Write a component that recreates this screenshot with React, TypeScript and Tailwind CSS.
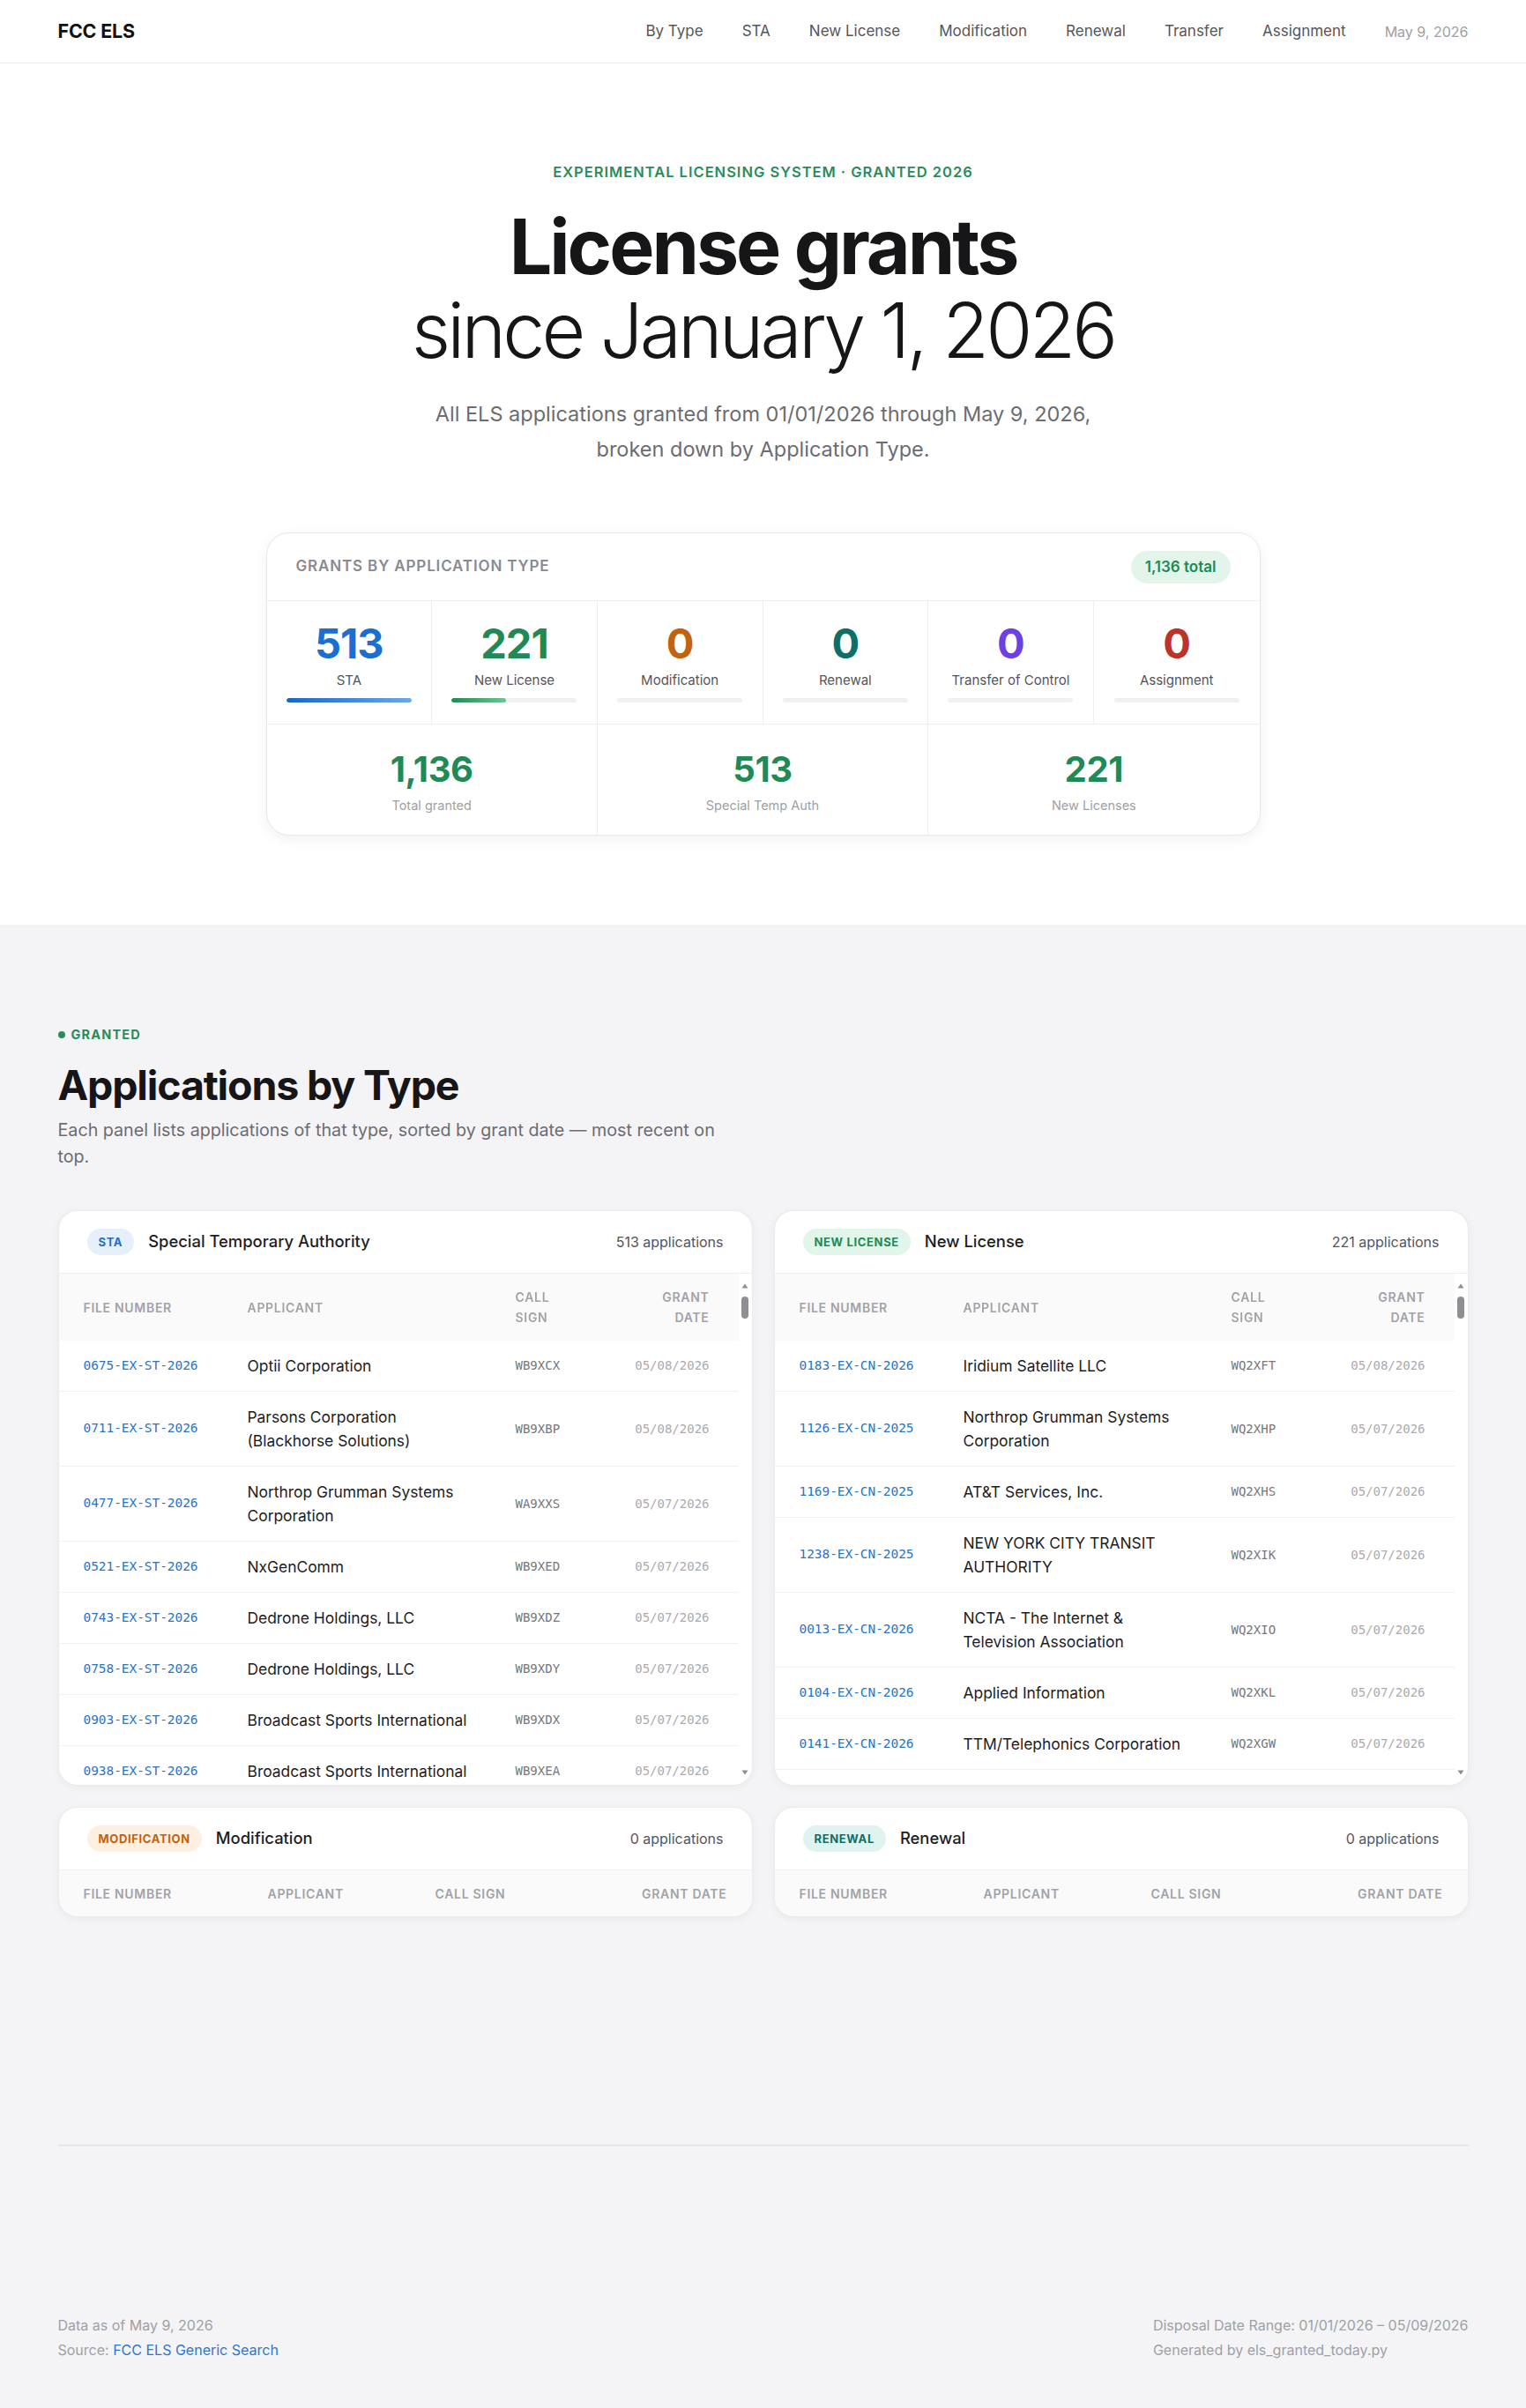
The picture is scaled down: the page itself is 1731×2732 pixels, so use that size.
import React from "react";

type Row = {
  file: string;
  applicant: string;
  call: string;
  date: string;
};

const staRows: Row[] = [
  { file: "0675-EX-ST-2026", applicant: "Optii Corporation", call: "WB9XCX", date: "05/08/2026" },
  { file: "0711-EX-ST-2026", applicant: "Parsons Corporation (Blackhorse Solutions)", call: "WB9XBP", date: "05/08/2026" },
  { file: "0477-EX-ST-2026", applicant: "Northrop Grumman Systems Corporation", call: "WA9XXS", date: "05/07/2026" },
  { file: "0521-EX-ST-2026", applicant: "NxGenComm", call: "WB9XED", date: "05/07/2026" },
  { file: "0743-EX-ST-2026", applicant: "Dedrone Holdings, LLC", call: "WB9XDZ", date: "05/07/2026" },
  { file: "0758-EX-ST-2026", applicant: "Dedrone Holdings, LLC", call: "WB9XDY", date: "05/07/2026" },
  { file: "0903-EX-ST-2026", applicant: "Broadcast Sports International", call: "WB9XDX", date: "05/07/2026" },
  { file: "0938-EX-ST-2026", applicant: "Broadcast Sports International", call: "WB9XEA", date: "05/07/2026" },
  { file: "0940-EX-ST-2026", applicant: "Broadcast Sports International", call: "WB9XEB", date: "05/07/2026" },
  { file: "0612-EX-ST-2026", applicant: "Optii Corporation", call: "WB9XCW", date: "05/06/2026" },
];

const newRows: Row[] = [
  { file: "0183-EX-CN-2026", applicant: "Iridium Satellite LLC", call: "WQ2XFT", date: "05/08/2026" },
  { file: "1126-EX-CN-2025", applicant: "Northrop Grumman Systems Corporation", call: "WQ2XHP", date: "05/07/2026" },
  { file: "1169-EX-CN-2025", applicant: "AT&T Services, Inc.", call: "WQ2XHS", date: "05/07/2026" },
  { file: "1238-EX-CN-2025", applicant: "NEW YORK CITY TRANSIT AUTHORITY", call: "WQ2XIK", date: "05/07/2026" },
  { file: "0013-EX-CN-2026", applicant: "NCTA - The Internet & Television Association", call: "WQ2XIO", date: "05/07/2026" },
  { file: "0104-EX-CN-2026", applicant: "Applied Information", call: "WQ2XKL", date: "05/07/2026" },
  { file: "0141-EX-CN-2026", applicant: "TTM/Telephonics Corporation", call: "WQ2XGW", date: "05/07/2026" },
  { file: "0122-EX-CN-2026", applicant: "Iridium Satellite LLC", call: "WQ2XFS", date: "05/06/2026" },
  { file: "0098-EX-CN-2026", applicant: "Applied Information", call: "WQ2XFR", date: "05/06/2026" },
];

const typeStats = [
  { value: "513", label: "STA", color: "text-[#1b6fd0]", fill: "w-full bg-linear-to-r from-[#1766c9] to-[#6ba8ea]" },
  { value: "221", label: "New License", color: "text-[#1f8a55]", fill: "w-[43%] bg-linear-to-r from-[#1f8a55] to-[#6cc596]" },
  { value: "0", label: "Modification", color: "text-[#c2620e]", fill: "w-0" },
  { value: "0", label: "Renewal", color: "text-[#0f6f66]", fill: "w-0" },
  { value: "0", label: "Transfer of Control", color: "text-[#6e3fe2]", fill: "w-0" },
  { value: "0", label: "Assignment", color: "text-[#bd3328]", fill: "w-0" },
];

const totals = [
  { value: "1,136", label: "Total granted" },
  { value: "513", label: "Special Temp Auth" },
  { value: "221", label: "New Licenses" },
];

const navLinks = ["By Type", "STA", "New License", "Modification", "Renewal", "Transfer", "Assignment"];

const mono = "font-['DejaVu_Sans_Mono',monospace]";

// the list scrolls; native bar is hidden and drawn as a slim classic track instead
function ScrollTrack() {
  return (
    <div className="flex w-[15px] flex-col items-center bg-white py-[10px]">
      <svg width="8" height="8" viewBox="0 0 8 8">
        <path d="M4 1.5 7.5 6.5H.5z" fill="#8e8e93" />
      </svg>
      <div className="mt-[8px] h-[25px] w-[8px] rounded-full bg-[#8e8e93]" />
      <div className="flex-1" />
      <svg width="8" height="8" viewBox="0 0 8 8">
        <path d="M4 6.5 7.5 1.5H.5z" fill="#8e8e93" />
      </svg>
    </div>
  );
}

function Panel({
  badge,
  badgeClass,
  title,
  count,
  rows,
}: {
  badge: string;
  badgeClass: string;
  title: string;
  count: string;
  rows: Row[];
}) {
  return (
    <div className="overflow-hidden rounded-[22px] border border-[#ebebee] bg-white shadow-[0_2px_10px_rgba(0,0,0,0.05)]">
      <div className="flex h-[71px] items-center justify-between border-b border-[#efeff2] pl-8 pr-[32px]">
        <div className="flex items-center gap-[16px]">
          <span className={`rounded-full px-[13px] py-[5px] text-[13px] font-bold leading-[20px] tracking-[0.05em] ${badgeClass}`}>
            {badge}
          </span>
          <span className="text-[18.4px] font-medium text-[#1d1d1f]">{title}</span>
        </div>
        <span className="text-[16px] text-[#555559]">{count}</span>
      </div>

      {rows.length > 0 ? (
        <div className="flex h-[580px]">
          <div className="flex-1 overflow-y-auto [scrollbar-width:none]">
            <table className="w-full table-fixed border-collapse text-left">
              <colgroup>
                <col className="w-[214px]" />
                <col className="w-[304px]" />
                <col className="w-[110px]" />
                <col />
              </colgroup>
              <thead>
                <tr className="text-[14px] font-semibold uppercase leading-[23px] tracking-[0.05em] text-[#a2a2a7]">
                  <th className="sticky top-0 bg-[#fafafb] py-[15px] pl-[28px] font-semibold">File number</th>
                  <th className="sticky top-0 bg-[#fafafb] py-[15px] font-semibold">Applicant</th>
                  <th className="sticky top-0 bg-[#fafafb] py-[15px] font-semibold">
                    <div className="w-[56px]">Call sign</div>
                  </th>
                  <th className="sticky top-0 bg-[#fafafb] py-[15px] pr-[33px] font-semibold">
                    <div className="ml-auto w-[64px] text-right">Grant date</div>
                  </th>
                </tr>
              </thead>
              <tbody>
                {rows.map((r) => (
                  <tr key={r.file} className="border-b border-[#f1f1f4]">
                    <td className={`py-[15px] pl-[28px] text-[14.4px] text-[#2a73c5] ${mono}`}>{r.file}</td>
                    <td className="py-[15px] pr-[46px] text-[17.4px] leading-[27px] text-[#1d1d1f]">{r.applicant}</td>
                    <td className={`py-[15px] text-[14px] text-[#77777c] ${mono}`}>{r.call}</td>
                    <td className={`py-[15px] pr-[33px] text-right text-[14px] text-[#ababaf] ${mono}`}>{r.date}</td>
                  </tr>
                ))}
              </tbody>
            </table>
          </div>
          <ScrollTrack />
        </div>
      ) : (
        <div className="flex h-[52px] items-center bg-[#fafafb] px-[28px] text-[14px] font-semibold uppercase tracking-[0.05em] text-[#a2a2a7]">
          <span className="w-[209px]">File number</span>
          <span className="w-[190px]">Applicant</span>
          <span className="flex-1">Call sign</span>
          <span>Grant date</span>
        </div>
      )}
    </div>
  );
}

export default function App() {
  return (
    <div className="min-h-screen bg-[#f4f4f6] font-['Inter',sans-serif] text-[#1d1d1f]">
      {/* top nav */}
      <header className="border-b border-[#ececef] bg-white">
        <div className="mx-auto flex h-[71px] max-w-[1600px] items-center justify-between">
          <span className="text-[21.5px] font-bold tracking-[-0.01em] text-[#111]">FCC ELS</span>
          <nav className="flex items-center gap-[44px] text-[17px] text-[#55555a]">
            {navLinks.map((l) => (
              <a key={l} href="#" className="hover:text-black">
                {l}
              </a>
            ))}
            <span className="text-[16px] text-[#a0a0a5]">May 9, 2026</span>
          </nav>
        </div>
      </header>

      {/* hero */}
      <section className="bg-white pb-[101px] pt-[112px]">
        <div className="flex flex-col items-center text-center">
          <p className="text-[16.5px] font-semibold uppercase leading-[22px] tracking-[0.06em] text-[#2a8c5c]">
            Experimental Licensing System · Granted 2026
          </p>
          <h1 className="mt-[27px] text-[86px] leading-[95px] text-[#161618]">
            <span className="block font-bold tracking-[-0.035em]">License grants</span>
            <span className="block font-light tracking-[-0.045em]">since January 1, 2026</span>
          </h1>
          <p className="mt-[27px] max-w-[820px] text-[23.5px] leading-[40px] text-[#6c6c72]">
            All ELS applications granted from 01/01/2026 through May 9, 2026,
            <br />
            broken down by Application Type.
          </p>

          <div className="mt-[74px] w-[1128px] overflow-hidden rounded-[26px] border border-[#e8e8eb] bg-white text-left shadow-[0_4px_16px_rgba(0,0,0,0.06)]">
            <div className="flex h-[77px] items-center justify-between border-b border-[#eeeef1] px-[33px]">
              <span className="text-[17px] font-semibold uppercase tracking-[0.05em] text-[#8a8a90]">
                Grants by application type
              </span>
              <span className="rounded-full bg-[#e3f5eb] px-[16px] py-[7px] text-[17px] font-semibold leading-[23px] text-[#1f8a55]">
                1,136 total
              </span>
            </div>

            <div className="grid grid-cols-6 border-b border-[#eeeef1]">
              {typeStats.map((s, i) => (
                <div
                  key={s.label}
                  className={`flex h-[139px] flex-col items-center pt-[22px] ${i < 5 ? "border-r border-[#eeeef1]" : ""}`}
                >
                  <span className={`text-[47px] font-bold leading-[52px] tracking-[-0.02em] ${s.color}`}>{s.value}</span>
                  <span className="mt-[6px] text-[15px] leading-[20px] text-[#55555a]">{s.label}</span>
                  <div className="mt-[10px] h-[5px] w-[142px] overflow-hidden rounded-full bg-[#f0f0f2]">
                    <div className={`h-full rounded-full ${s.fill}`} />
                  </div>
                </div>
              ))}
            </div>

            <div className="grid grid-cols-3">
              {totals.map((t, i) => (
                <div
                  key={t.label}
                  className={`flex h-[125px] flex-col items-center pt-[28px] ${i < 2 ? "border-r border-[#eeeef1]" : ""}`}
                >
                  <span className="text-[40px] font-bold leading-[46px] tracking-[-0.01em] text-[#1f8a55]">{t.value}</span>
                  <span className="mt-[8px] text-[14.5px] leading-[20px] text-[#a0a0a5]">{t.label}</span>
                </div>
              ))}
            </div>
          </div>
        </div>
      </section>

      {/* applications by type */}
      <main className="mx-auto max-w-[1600px] pt-[115px]">
        <div className="flex items-center gap-[7px] text-[14.5px] font-bold uppercase leading-[20px] tracking-[0.08em] text-[#2a8c5c]">
          <span className="h-[8px] w-[8px] rounded-full bg-[#2a8c5c]" />
          Granted
        </div>
        <h2 className="mt-[20px] text-[46.5px] font-bold leading-[55px] tracking-[-0.025em] text-[#161618]">
          Applications by Type
        </h2>
        <p className="mt-[8px] max-w-[760px] text-[19.7px] leading-[30px] text-[#6c6c72]">
          Each panel lists applications of that type, sorted by grant date — most recent on top.
        </p>

        <div className="mt-[46px] grid grid-cols-2 items-start gap-6">
          <Panel
            badge="STA"
            badgeClass="bg-[#e6f0fb] text-[#1f6fc4]"
            title="Special Temporary Authority"
            count="513 applications"
            rows={staRows}
          />
          <Panel
            badge="NEW LICENSE"
            badgeClass="bg-[#e1f5ea] text-[#1f8a55]"
            title="New License"
            count="221 applications"
            rows={newRows}
          />
          <Panel
            badge="MODIFICATION"
            badgeClass="bg-[#fdf0e1] text-[#c2620e]"
            title="Modification"
            count="0 applications"
            rows={[]}
          />
          <Panel
            badge="RENEWAL"
            badgeClass="bg-[#dff4f0] text-[#0f6f66]"
            title="Renewal"
            count="0 applications"
            rows={[]}
          />
        </div>

        <footer className="mt-[258px] flex justify-between border-t-2 border-[#e6e6ea] pb-[56px] pt-[189px] text-[16px] leading-[28px] text-[#a0a0a5]">
          <div>
            <p>Data as of May 9, 2026</p>
            <p>
              Source:{" "}
              <a href="#" className="text-[#2a78cf]">
                FCC ELS Generic Search
              </a>
            </p>
          </div>
          <div>
            <p>Disposal Date Range: 01/01/2026 – 05/09/2026</p>
            <p>Generated by els_granted_today.py</p>
          </div>
        </footer>
      </main>
    </div>
  );
}
